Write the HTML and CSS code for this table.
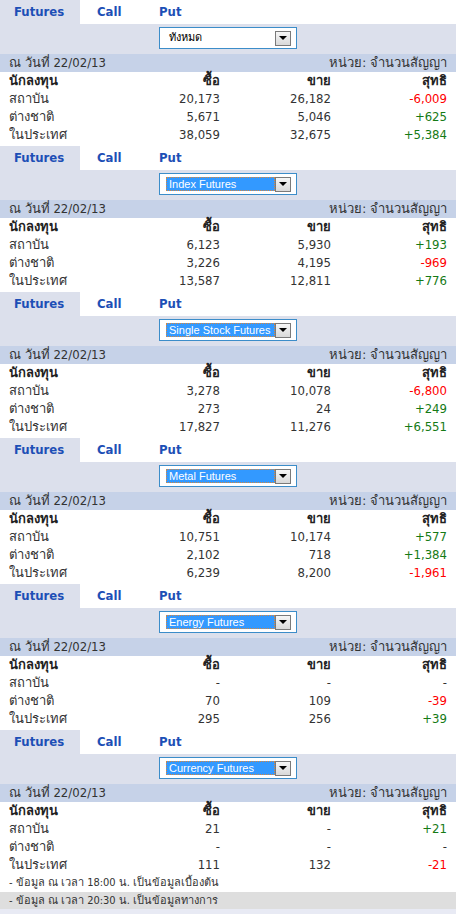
FILE: index.html
```html
<!DOCTYPE html>
<html lang="th">

<head>
  <meta charset="UTF-8">
  <meta name="viewport" content="width=device-width, initial-scale=1.0">
  <title>สถิติการซื้อขาย</title>
  <link rel="stylesheet" href="styles.css">
</head>

<body>
  <!-- ทั้งหมด -->
  <div class="block">
    <div class="tabs">
      <span class="tab active">Futures</span>
      <span class="tab">Call</span>
      <span class="tab tab-put">Put</span>
    </div>
    <div class="filter">
      <div class="select">
        <span class="option plain">ทั้งหมด</span>
        <span class="drop"></span>
      </div>
    </div>
    <div class="date-row">
      <span>ณ วันที่ 22/02/13</span>
      <span>หน่วย: จำนวนสัญญา</span>
    </div>
    <div class="grid">
      <b>นักลงทุน</b><b class="num">ซื้อ</b><b class="num">ขาย</b><b class="num">สุทธิ</b>
      <span>สถาบัน</span><span class="num">20,173</span><span class="num">26,182</span><span class="num neg">-6,009</span>
      <span>ต่างชาติ</span><span class="num">5,671</span><span class="num">5,046</span><span class="num pos">+625</span>
      <span>ในประเทศ</span><span class="num">38,059</span><span class="num">32,675</span><span class="num pos">+5,384</span>
    </div>
  </div>

  <!-- Index Futures -->
  <div class="block">
    <div class="tabs">
      <span class="tab active">Futures</span>
      <span class="tab">Call</span>
      <span class="tab tab-put">Put</span>
    </div>
    <div class="filter">
      <div class="select">
        <span class="option">Index Futures</span>
        <span class="drop"></span>
      </div>
    </div>
    <div class="date-row">
      <span>ณ วันที่ 22/02/13</span>
      <span>หน่วย: จำนวนสัญญา</span>
    </div>
    <div class="grid">
      <b>นักลงทุน</b><b class="num">ซื้อ</b><b class="num">ขาย</b><b class="num">สุทธิ</b>
      <span>สถาบัน</span><span class="num">6,123</span><span class="num">5,930</span><span class="num pos">+193</span>
      <span>ต่างชาติ</span><span class="num">3,226</span><span class="num">4,195</span><span class="num neg">-969</span>
      <span>ในประเทศ</span><span class="num">13,587</span><span class="num">12,811</span><span class="num pos">+776</span>
    </div>
  </div>

  <!-- Single Stock Futures -->
  <div class="block">
    <div class="tabs">
      <span class="tab active">Futures</span>
      <span class="tab">Call</span>
      <span class="tab tab-put">Put</span>
    </div>
    <div class="filter">
      <div class="select">
        <span class="option">Single Stock Futures</span>
        <span class="drop"></span>
      </div>
    </div>
    <div class="date-row">
      <span>ณ วันที่ 22/02/13</span>
      <span>หน่วย: จำนวนสัญญา</span>
    </div>
    <div class="grid">
      <b>นักลงทุน</b><b class="num">ซื้อ</b><b class="num">ขาย</b><b class="num">สุทธิ</b>
      <span>สถาบัน</span><span class="num">3,278</span><span class="num">10,078</span><span class="num neg">-6,800</span>
      <span>ต่างชาติ</span><span class="num">273</span><span class="num">24</span><span class="num pos">+249</span>
      <span>ในประเทศ</span><span class="num">17,827</span><span class="num">11,276</span><span class="num pos">+6,551</span>
    </div>
  </div>

  <!-- Metal Futures -->
  <div class="block">
    <div class="tabs">
      <span class="tab active">Futures</span>
      <span class="tab">Call</span>
      <span class="tab tab-put">Put</span>
    </div>
    <div class="filter">
      <div class="select">
        <span class="option">Metal Futures</span>
        <span class="drop"></span>
      </div>
    </div>
    <div class="date-row">
      <span>ณ วันที่ 22/02/13</span>
      <span>หน่วย: จำนวนสัญญา</span>
    </div>
    <div class="grid">
      <b>นักลงทุน</b><b class="num">ซื้อ</b><b class="num">ขาย</b><b class="num">สุทธิ</b>
      <span>สถาบัน</span><span class="num">10,751</span><span class="num">10,174</span><span class="num pos">+577</span>
      <span>ต่างชาติ</span><span class="num">2,102</span><span class="num">718</span><span class="num pos">+1,384</span>
      <span>ในประเทศ</span><span class="num">6,239</span><span class="num">8,200</span><span class="num neg">-1,961</span>
    </div>
  </div>

  <!-- Energy Futures -->
  <div class="block">
    <div class="tabs">
      <span class="tab active">Futures</span>
      <span class="tab">Call</span>
      <span class="tab tab-put">Put</span>
    </div>
    <div class="filter">
      <div class="select">
        <span class="option">Energy Futures</span>
        <span class="drop"></span>
      </div>
    </div>
    <div class="date-row">
      <span>ณ วันที่ 22/02/13</span>
      <span>หน่วย: จำนวนสัญญา</span>
    </div>
    <div class="grid">
      <b>นักลงทุน</b><b class="num">ซื้อ</b><b class="num">ขาย</b><b class="num">สุทธิ</b>
      <span>สถาบัน</span><span class="num">-</span><span class="num">-</span><span class="num">-</span>
      <span>ต่างชาติ</span><span class="num">70</span><span class="num">109</span><span class="num neg">-39</span>
      <span>ในประเทศ</span><span class="num">295</span><span class="num">256</span><span class="num pos">+39</span>
    </div>
  </div>

  <!-- Currency Futures -->
  <div class="block last">
    <div class="tabs">
      <span class="tab active">Futures</span>
      <span class="tab">Call</span>
      <span class="tab tab-put">Put</span>
    </div>
    <div class="filter">
      <div class="select">
        <span class="option">Currency Futures</span>
        <span class="drop"></span>
      </div>
    </div>
    <div class="date-row">
      <span>ณ วันที่ 22/02/13</span>
      <span>หน่วย: จำนวนสัญญา</span>
    </div>
    <div class="grid">
      <b>นักลงทุน</b><b class="num">ซื้อ</b><b class="num">ขาย</b><b class="num">สุทธิ</b>
      <span>สถาบัน</span><span class="num">21</span><span class="num">-</span><span class="num pos">+21</span>
      <span>ต่างชาติ</span><span class="num">-</span><span class="num">-</span><span class="num">-</span>
      <span>ในประเทศ</span><span class="num">111</span><span class="num">132</span><span class="num neg">-21</span>
    </div>
  </div>

  <p class="note">- ข้อมูล ณ เวลา 18:00 น. เป็นข้อมูลเบื้องต้น</p>
  <p class="note note-gray">- ข้อมูล ณ เวลา 20:30 น. เป็นข้อมูลทางการ</p>
</body>

</html>
```

FILE: styles.css
```css
* {
  box-sizing: border-box;
  padding: 0;
  margin: 0;
}

html,
body {
  width: 100%;
}

body {
  background-color: #e8eaf4;
  font-family: "DejaVu Sans Condensed", "Liberation Sans", sans-serif;
  font-size: 13px;
  color: #333;
}

.block {
  background-color: #fff;
  padding-bottom: 2px;
}

.block.last {
  padding-bottom: 0;
}

.tabs {
  display: flex;
  height: 24px;
  line-height: 24px;
}

.tab {
  width: 61px;
  padding-left: 17px;
  font-family: "DejaVu Sans Condensed", "Liberation Sans", sans-serif;
  font-weight: bold;
  font-size: 13px;
  color: #1d4fb6;
}

.tab.active {
  width: 80px;
  padding-left: 14px;
  background-color: #dce0ec;
}

.tab-put {
  padding-left: 18px;
}

.filter {
  height: 30px;
  padding-top: 3px;
  background-color: #dce0ec;
}

.select {
  display: flex;
  align-items: center;
  width: 138px;
  height: 22px;
  margin: 0 auto;
  padding-left: 6px;
  border: 1px solid #3c8dc9;
  background-color: #fff;
}

.option {
  width: 109px;
  height: 14px;
  line-height: 12px;
  padding-left: 2px;
  font-family: "Liberation Sans", sans-serif;
  font-size: 11px;
  color: #fff;
  background-color: #3399ff;
  border: 1px dotted #d8873c;
  white-space: nowrap;
  overflow: hidden;
}

.option.plain {
  font-family: "DejaVu Sans Condensed", "Liberation Sans", sans-serif;
  color: #000;
  background-color: transparent;
  border-color: transparent;
}

.drop {
  position: relative;
  width: 16px;
  height: 15px;
  border: 1px solid #7a7a7a;
  background: linear-gradient(#f6f6f6, #d9d9d9);
}

.drop::after {
  content: "";
  position: absolute;
  left: 3px;
  top: 4px;
  border-left: 4px solid transparent;
  border-right: 4px solid transparent;
  border-top: 4px solid #000;
}

.date-row {
  display: flex;
  justify-content: space-between;
  height: 18px;
  line-height: 18px;
  padding: 0 9px;
  background-color: #c6d2e8;
}

.grid {
  display: grid;
  grid-template-columns: 120px 91px 111px 116px;
  grid-auto-rows: 18px;
  line-height: 18px;
  padding: 0 9px;
}

.grid b {
  color: #222;
}

.num {
  text-align: right;
}

.neg {
  color: #ff0000;
}

.pos {
  color: #157a15;
}

.note {
  height: 18px;
  line-height: 18px;
  padding-left: 9px;
  font-size: 11px;
  background-color: #fff;
}

.note-gray {
  height: 17px;
  background-color: #dedede;
}
```
